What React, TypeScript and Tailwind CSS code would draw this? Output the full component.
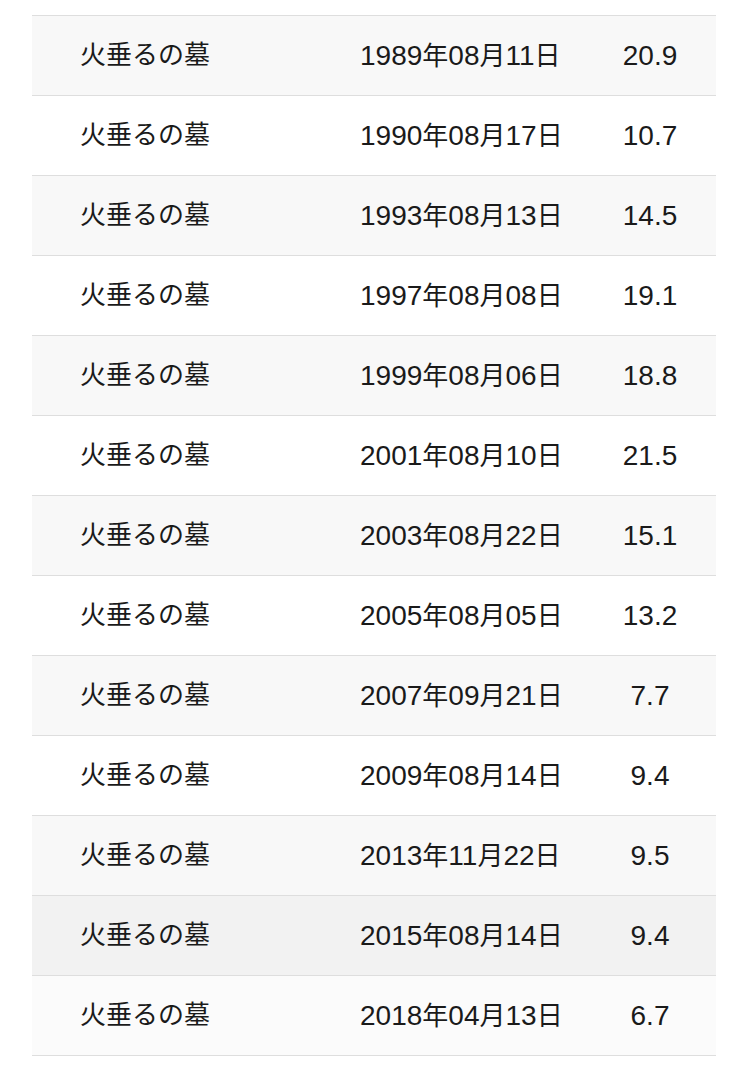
const rows: [string, string, string][] = [
  ["火垂るの墓", "1989年08月11日", "20.9"],
  ["火垂るの墓", "1990年08月17日", "10.7"],
  ["火垂るの墓", "1993年08月13日", "14.5"],
  ["火垂るの墓", "1997年08月08日", "19.1"],
  ["火垂るの墓", "1999年08月06日", "18.8"],
  ["火垂るの墓", "2001年08月10日", "21.5"],
  ["火垂るの墓", "2003年08月22日", "15.1"],
  ["火垂るの墓", "2005年08月05日", "13.2"],
  ["火垂るの墓", "2007年09月21日", "7.7"],
  ["火垂るの墓", "2009年08月14日", "9.4"],
  ["火垂るの墓", "2013年11月22日", "9.5"],
  ["火垂るの墓", "2015年08月14日", "9.4"],
  ["火垂るの墓", "2018年04月13日", "6.7"],
];

// digits render a touch larger than the kanji, like the original
function DateText({ value }: { value: string }) {
  const parts = value.match(/[0-9.]+|[^0-9.]+/g) ?? [];
  return (
    <>
      {parts.map((p, i) =>
        /[0-9]/.test(p) ? (
          <span key={i} className="text-[28px]">{p}</span>
        ) : (
          <span key={i}>{p}</span>
        )
      )}
    </>
  );
}

export default function App() {
  return (
    <div className="min-h-screen bg-white pt-[15px] px-[32px] pb-6 font-['Liberation_Sans','Noto_Sans_CJK_JP',sans-serif] text-[26px] text-[#1a1a1a]">
      <div className="w-[684px] border-t border-[#dedede]">
        {rows.map(([title, date, rating], i) => {
          const bg = i === 11 ? "bg-[#f2f2f2]" : i === 12 ? "bg-[#fbfbfb]" : i % 2 === 0 ? "bg-[#f8f8f8]" : "bg-white";
          return (
            <div
              key={date}
              className={`grid grid-cols-[328px_256px_68px] items-center h-[80px] border-b border-[#dedede] ${bg}`}
            >
              <div className="pl-[48px]">{title}</div>
              <div className="whitespace-nowrap">
                <DateText value={date} />
              </div>
              <div className="text-center text-[28px] whitespace-nowrap">{rating}</div>
            </div>
          );
        })}
      </div>
    </div>
  );
}
